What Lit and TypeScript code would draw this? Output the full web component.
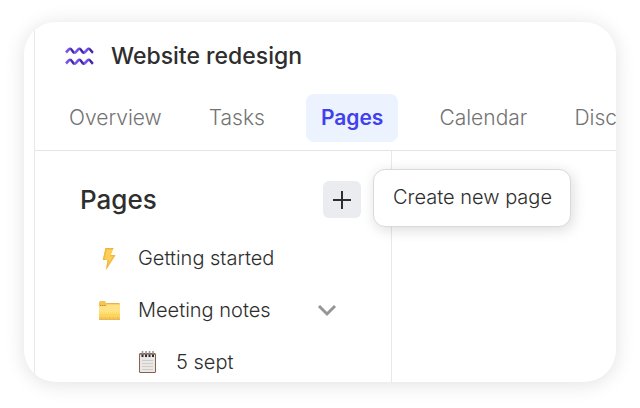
import { LitElement, html, css, svg } from "lit";
import { customElement, state } from "lit/decorators.js";

const bolt = svg`
  <path d="M8.500 2H16.500L14 9H18.500L9 24L10.500 14H5.800Z" fill="#fccf57"/>
  <path d="M8.500 2H16.500L16 3.500H9.500L7.500 13L10.500 14H5.800Z" fill="#f2b640"/>
  <path d="M18.500 9L9 24L10.500 14H12L11 18.500L16.200 10.200H13L14 9Z" fill="#f2b640"/>`;

const folder = svg`
  <path d="M2 4.500Q2 3 3.500 3H7.500Q9 3 9 5H22Q23 5 23 6V21Q23 22 22 22H3Q2 22 2 21Z" fill="#f4c554"/>
  <path d="M2 8H9L10 6.500H23V19H2Z" fill="#fee283"/>
  <path d="M2 16H23V19.500H2Z" fill="#fbd65b"/>
  <path d="M3 7.500H9" stroke="#b98222" stroke-width="1.200" stroke-dasharray="1.200 .9"/>
  <path d="M3 15.500H22" stroke="#fbd65b" stroke-width="2" stroke-dasharray="1 1"/>
  <path d="M10 5.500H22" stroke="#eab04c"/>
  <path d="M2 21.500H23" stroke="#e9b565"/>
  <path d="M4 19.500H22" stroke="#efb23c" stroke-dasharray="1 3"/>`;

const notepad = svg`
  <rect x="4" y="3" width="17" height="20" rx="1.500" fill="#86644b"/>
  <rect x="5" y="4" width="15" height="18" fill="#e9e8e6"/>
  <path d="M7 10.500H18M7 13.500H18M7 16.500H18M7 19.500H18" stroke="#cfccc4"/>
  <path d="M5 4.500H20" stroke="#a79283"/>
  <path d="M7.500 1V5M11 1V5M14.500 1V5M18 1V5" stroke="#9b908a" stroke-width="1.500"/>
  <path d="M7.500 4.500V7M11 4.500V7M14.500 4.500V7M18 4.500V7" stroke="#2b2c38" stroke-width="2"/>`;

@customElement("app-root")
export class AppRoot extends LitElement {
  @state() private active = "Pages";

  private tabs = ["Overview", "Tasks", "Pages", "Calendar", "Discussions"];
  private pages = [
    { name: "Getting started", icon: bolt, nested: false, open: false },
    { name: "Meeting notes", icon: folder, nested: false, open: true },
    { name: "5 sept", icon: notepad, nested: true, open: false },
  ];

  static styles = css`
    :host {
      display: flex;
      box-sizing: border-box;
      min-height: 100vh;
      padding: 22px 24px 26px;
      background: #fff;
      color: #2e2e2e;
      font-family: Inter, "Liberation Sans", sans-serif;
      font-size: 20px;
      font-weight: 300;
    }
    * { box-sizing: border-box; }
    button, a { font: inherit; color: inherit; }
    button { border: 0; padding: 0; background: none; cursor: pointer; }
    svg { display: block; flex: none; }
    .card {
      flex: 1;
      min-width: 0;
      display: flex;
      padding-left: 10px;
      border-radius: 32px;
      overflow: hidden;
      background: #fff;
      box-shadow: 0 2px 20px rgba(0, 0, 0, 0.12);
    }
    .app {
      flex: 1;
      min-width: 0;
      display: flex;
      flex-direction: column;
      border-left: 1px solid #e8e8e8;
    }
    .title {
      display: flex;
      align-items: center;
      gap: 16px;
      height: 68px;
      padding-left: 30px;
    }
    h1, h2 { margin: 0; font-weight: 500; }
    h1 { font-size: 23px; }
    h2 { font-size: 26px; line-height: 37px; }
    .tabs {
      display: flex;
      align-items: center;
      gap: 47px;
      height: 61px;
      padding: 0 0 4px 34px;
      border-bottom: 1px solid #e4e4e4;
      white-space: nowrap;
      font-size: 21px;
    }
    .tab {
      flex: none;
      line-height: 48px;
      text-decoration: none;
      color: #737373;
    }
    .tab.active {
      margin: 0 -6px;
      padding: 0 15px;
      border-radius: 8px;
      background: #edf2ff;
      color: #4040ee;
      font-weight: 600;
    }
    .body { flex: 1; display: flex; }
    .side {
      width: 357px;
      flex: none;
      padding-top: 30px;
      border-right: 1px solid #e8e8e8;
    }
    .head {
      display: flex;
      align-items: flex-start;
      justify-content: space-between;
      padding: 0 30px 0 45px;
    }
    .adder { position: relative; }
    .add {
      display: grid;
      place-items: center;
      width: 38px;
      height: 37px;
      border-radius: 6px;
      background: #ebecf0;
    }
    .tip {
      position: absolute;
      left: 50px;
      top: -12px;
      padding: 0 18px 2px 19px;
      border: 1px solid #d9d9d9;
      border-radius: 12px;
      background: #fff;
      box-shadow: 2px 3px 14px rgba(0, 0, 0, 0.14);
      line-height: 54px;
      white-space: nowrap;
    }
    ul {
      display: grid;
      gap: 12px;
      margin: 20px 0 0;
      padding: 0;
      list-style: none;
    }
    li {
      display: flex;
      align-items: center;
      justify-content: space-between;
      height: 40px;
      padding: 0 54px 0 62px;
    }
    .nested { padding-left: 100px; }
    .page {
      display: flex;
      align-items: center;
      gap: 17px;
      line-height: 24px;
      text-decoration: none;
    }
  `;

  render() {
    return html`
      <main class="card">
        <div class="app">
          <header class="title">
            <svg width="30" height="22" viewBox="0 0 30 22" fill="none" stroke-width="2.600" aria-hidden="true">
              <defs>
                <linearGradient id="wave" x1="0" x2="9.300" y1="0" y2="0" gradientUnits="userSpaceOnUse" spreadMethod="repeat">
                  <stop offset="0" stop-color="#7f5cf8"/>
                  <stop offset=".5" stop-color="#6d4be6"/>
                  <stop offset=".75" stop-color="#3b2499"/>
                  <stop offset="1" stop-color="#4a2fb5"/>
                </linearGradient>
              </defs>
              <path stroke="url(#wave)" d="M1 7.500L3.800 4.500Q5 3 6.300 4.500L8.300 7Q9.500 8.300 10.800 7L13.200 4.300Q14.300 3 15.600 4.500L17.600 7Q18.800 8.300 20 7L22.500 4.300Q23.700 3 25 4.500L28 7.800"/>
              <path stroke="url(#wave)" d="M1 18.500L3.800 15.500Q5 14 6.300 15.500L8.300 18Q9.500 19.300 10.800 18L13.200 15.300Q14.300 14 15.600 15.500L17.600 18Q18.800 19.300 20 18L22.500 15.300Q23.700 14 25 15.500L28 18.800"/>
            </svg>
            <h1>Website redesign</h1>
          </header>
          <nav class="tabs">
            ${this.tabs.map((t) => html`<a
              href="#"
              class="tab ${t === this.active ? "active" : ""}"
              @click=${(e: Event) => { e.preventDefault(); this.active = t; }}
            >${t}</a>`)}
          </nav>
          <div class="body">
            <aside class="side">
              <div class="head">
                <h2>Pages</h2>
                <div class="adder">
                  <button class="add" aria-labelledby="tip">
                    <svg width="18" height="18" viewBox="0 0 18 18" stroke="#2e2e2e" stroke-width="2"><path d="M9 0V18M0 9H18"/></svg>
                  </button>
                  <div class="tip" id="tip" role="tooltip">Create new page</div>
                </div>
              </div>
              <ul>
                ${this.pages.map((p) => html`<li class=${p.nested ? "nested" : ""}>
                  <a class="page" href="#">
                    <svg width="24" height="24" viewBox="0 0 24 24" aria-hidden="true">${p.icon}</svg>
                    ${p.name}
                  </a>
                  ${p.open ? html`<button aria-label="Collapse ${p.name}">
                    <svg width="20" height="14" viewBox="0 0 20 14" fill="none" stroke="#969696" stroke-width="3"><path d="M2 3L10 11L18 3"/></svg>
                  </button>` : ""}
                </li>`)}
              </ul>
            </aside>
          </div>
        </div>
      </main>`;
  }
}
